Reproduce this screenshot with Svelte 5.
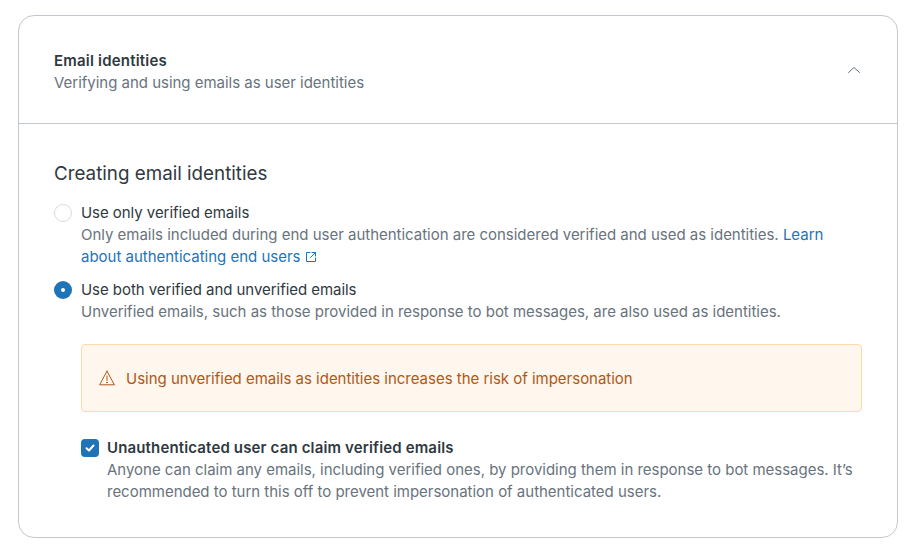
<script>
  let mode = $state('both');
  let claim = $state(true);
</script>

<div class="page">
  <section class="card">
    <header class="head">
      <div>
        <h2>Email identities</h2>
        <p>Verifying and using emails as user identities</p>
      </div>
      <svg class="chevron" width="14" height="14" viewBox="0 0 14 14" fill="none" stroke="#68737d" stroke-width="1" stroke-linecap="round" stroke-linejoin="round">
        <path d="M1.5 9.5 7 4.5l5.5 5" />
      </svg>
    </header>

    <div class="body">
      <h3>Creating email identities</h3>

      <label class="option">
        <input type="radio" name="mode" value="verified" bind:group={mode} />
        <span class="radio"></span>
        <span class="text">
          <span class="label">Use only verified emails</span>
          <span class="hint">Only emails included during end user authentication are considered verified and used as identities. <a href="#learn">Learn about authenticating end users<svg class="ext" width="12" height="12" viewBox="0 0 12 12" fill="none" stroke="currentColor" stroke-width="1" stroke-linecap="round" stroke-linejoin="round"><path d="M5 1.5H1.5v9h9V7M7 1.5h3.5V5M10.5 1.5 5.5 6.5" /></svg></a></span>
        </span>
      </label>

      <label class="option second">
        <input type="radio" name="mode" value="both" bind:group={mode} />
        <span class="radio"></span>
        <span class="text">
          <span class="label">Use both verified and unverified emails</span>
          <span class="hint">Unverified emails, such as those provided in response to bot messages, are also used as identities.</span>
        </span>
      </label>

      <div class="nested">
        <div class="alert">
          <svg width="16" height="16" viewBox="0 0 16 16" fill="none" stroke="#ad5918" stroke-linecap="round" stroke-linejoin="round">
            <path d="M8 1.2.6 14.8h14.8L8 1.2Z" />
            <path d="M8 6v4.5" />
            <circle cx="8" cy="12.5" r=".4" fill="#ad5918" />
          </svg>
          <span class="alert-text">Using unverified emails as identities increases the risk of impersonation</span>
        </div>

        <label class="option check">
          <input type="checkbox" bind:checked={claim} />
          <span class="box">
            <svg width="16" height="16" viewBox="0 0 16 16" fill="none" stroke="#fff" stroke-width="2" stroke-linecap="round" stroke-linejoin="round">
              <path d="M4.5 8.2 7 10.5l4.5-5" />
            </svg>
          </span>
          <span class="text">
            <span class="label strong">Unauthenticated user can claim verified emails</span>
            <span class="hint">Anyone can claim any emails, including verified ones, by providing them in response to bot messages. It’s recommended to turn this off to prevent impersonation of authenticated users.</span>
          </span>
        </label>
      </div>
    </div>
  </section>
</div>

<style>
  :global(body) {
    background: #fff;
    font-family: Inter, "Liberation Sans", sans-serif;
    font-size: 15px;
    line-height: 22px;
    color: #2f3941;
  }

  .page {
    padding: 15px 20px 17px 18px;
  }

  .card {
    border: 1px solid #c2c8cc;
    border-radius: 16px;
    background: #fff;
  }

  .head {
    display: flex;
    align-items: center;
    justify-content: space-between;
    padding: 34px 36px 29px 35px;
    border-bottom: 1px solid #c2c8cc;
  }

  h2 {
    margin: 0;
    font-size: 15px;
    line-height: 22px;
    font-weight: 600;
    letter-spacing: 0.2px;
  }

  .head p {
    margin: 0;
    color: #68737d;
    letter-spacing: -0.02px;
  }

  .chevron {
    margin-top: -4px;
  }

  .body {
    padding: 36px 35px 34px;
  }

  h3 {
    margin: 0 0 14px;
    font-size: 18.8px;
    line-height: 28px;
    font-weight: 400;
  }

  .option {
    display: block;
    position: relative;
    padding-left: 27px;
  }

  .option input {
    position: absolute;
    opacity: 0;
    margin: 0;
  }

  .second {
    margin-top: 11px;
  }

  .radio {
    position: absolute;
    left: 0;
    top: 2px;
    width: 18px;
    height: 18px;
    box-sizing: border-box;
    border: 1px solid #d8dcde;
    border-radius: 50%;
    background: #fff;
  }

  input:checked + .radio {
    border: 0;
    background: #1f73b7;
  }

  input:checked + .radio::after {
    content: "";
    position: absolute;
    left: 7px;
    top: 7px;
    width: 4px;
    height: 4px;
    border-radius: 50%;
    background: #fff;
  }

  .text {
    display: block;
  }

  .label,
  .hint {
    display: block;
  }

  .label {
    letter-spacing: -0.05px;
  }

  .strong {
    font-weight: 600;
    letter-spacing: 0.15px;
  }

  .hint {
    color: #68737d;
    letter-spacing: -0.015px;
  }

  a {
    color: #1f73b7;
    text-decoration: none;
  }

  .ext {
    margin-left: 5px;
    vertical-align: -1px;
  }

  .nested {
    padding-left: 27px;
  }

  .alert {
    display: flex;
    align-items: center;
    gap: 10px;
    margin-top: 21px;
    height: 68px;
    box-sizing: border-box;
    padding: 0 18px 0 17px;
    background: #fff6ed;
    border: 1px solid #fcdba9;
    border-radius: 4px;
    color: #ad5918;
  }

  .alert-text {
    margin-left: 1px;
    padding-top: 2px;
    letter-spacing: -0.015px;
  }

  .check {
    padding-left: 26px;
    margin-top: 25px;
  }

  .box {
    position: absolute;
    left: 0;
    top: 2px;
    width: 18px;
    height: 18px;
    display: flex;
    align-items: center;
    justify-content: center;
    border-radius: 4px;
    background: #1f73b7;
  }
</style>
